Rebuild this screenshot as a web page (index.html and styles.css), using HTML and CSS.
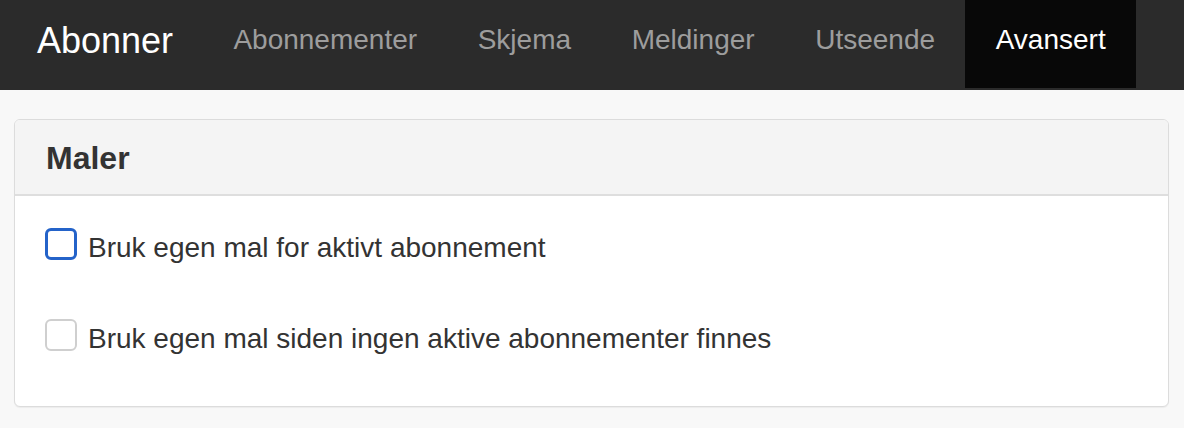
FILE: index.html
```html
<!DOCTYPE html>
<html lang="no">
<head>
<meta charset="utf-8">
<title>Abonner</title>
<link rel="stylesheet" href="styles.css">
</head>
<body>
<nav class="navbar">
  <a class="brand" href="#">Abonner</a>
  <ul class="nav">
    <li><a href="#">Abonnementer</a></li>
    <li><a href="#">Skjema</a></li>
    <li><a href="#">Meldinger</a></li>
    <li><a href="#">Utseende</a></li>
    <li class="active"><a href="#">Avansert</a></li>
  </ul>
</nav>
<main class="main">
  <section class="panel">
    <header class="panel-heading"><h3 class="panel-title">Maler</h3></header>
    <div class="panel-body">
      <label class="check-row"><span class="box box-focus"></span><span class="label-text">Bruk egen mal for aktivt abonnement</span></label>
      <label class="check-row"><span class="box"></span><span class="label-text">Bruk egen mal siden ingen aktive abonnementer finnes</span></label>
    </div>
  </section>
</main>
</body>
</html>
```

FILE: styles.css
```css
* { box-sizing: border-box; }
html, body { margin: 0; padding: 0; }
body {
  background: #f8f8f8;
  font-family: "Liberation Sans", Arial, sans-serif;
  color: #333;
}
.navbar {
  display: flex;
  align-items: stretch;
  height: 90px;
  padding-bottom: 2px;
  background: #2b2b2b;
}
.brand {
  display: flex;
  align-items: center;
  padding: 0 30px 0 37px;
  padding-bottom: 6px;
  font-size: 36px;
  color: #fff;
  text-decoration: none;
}
.nav {
  display: flex;
  list-style: none;
  margin: 0;
  padding: 0;
}
.nav li { display: flex; }
.nav a {
  display: flex;
  align-items: center;
  padding: 0 30.3px;
  padding-bottom: 8px;
  font-size: 28px;
  color: #9d9d9d;
  text-decoration: none;
}
.nav li.active a {
  background: #080808;
  color: #fff;
}
.main {
  padding: 29px 15px 20px 14px;
}
.panel {
  background: #fff;
  border: 1px solid #dcdcdc;
  border-radius: 6px;
  box-shadow: 0 1px 1px rgba(0,0,0,0.05);
  overflow: hidden;
}
.panel-heading {
  height: 76px;
  display: flex;
  align-items: center;
  padding: 2px 31px 0;
  background: #f4f4f4;
  border-bottom: 2px solid #dedede;
}
.panel-title {
  margin: 0;
  font-size: 32px;
  font-weight: bold;
  color: #333;
}
.panel-body {
  display: flex;
  flex-direction: column;
  gap: 59px;
  padding: 32px 30px 55px;
}
.check-row {
  display: flex;
  align-items: center;
  gap: 11px;
  font-size: 28px;
  color: #333;
}
.box {
  width: 32px;
  height: 32px;
  flex: none;
  border: 2px solid #cfcfcf;
  border-radius: 6px;
  background: #fff;
}
.box-focus {
  border: 3px solid #2463c9;
}
.label-text {
  line-height: 32px;
  padding-top: 4px;
  margin-bottom: -4px;
}
```
